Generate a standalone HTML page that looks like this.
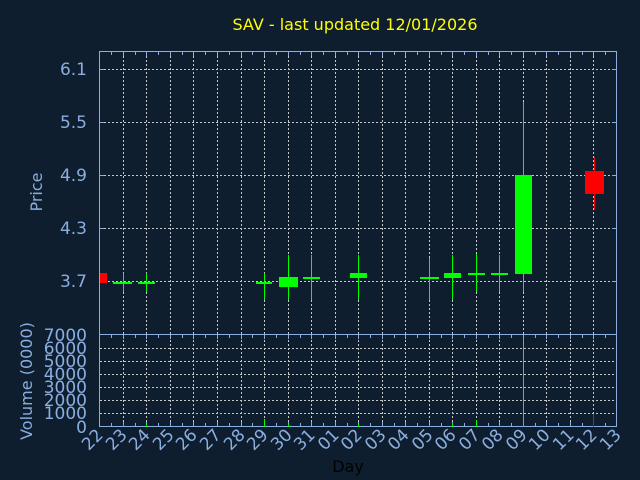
<!DOCTYPE html>
<html><head><meta charset="utf-8"><style>
html,body{margin:0;padding:0;background:#0f1e2f;}
svg{display:block;font-family:"DejaVu Sans","Liberation Sans",sans-serif;}
</style></head><body>
<svg width="640" height="480" viewBox="0 0 640 480" xmlns="http://www.w3.org/2000/svg">
<rect width="640" height="480" fill="#0f1e2f"/>
<text x="355" y="30" fill="#ffff00" font-size="16" text-anchor="middle">SAV - last updated 12/01/2026</text>
<g stroke="#c8c8c8" stroke-width="1" stroke-dasharray="2,2">
<path d="M100 69.5H617M100 122.5H617M100 175.5H617M100 228.5H617M100 281.5H617"/>
<path d="M100 348.5H617M100 361.5H617M100 374.5H617M100 387.5H617M100 400.5H617M100 413.5H617"/>
<path d="M123.5 52V427M146.5 52V427M170.5 52V427M193.5 52V427M217.5 52V427M241.5 52V427M264.5 52V427M288.5 52V427M311.5 52V427M335.5 52V427M358.5 52V427M382.5 52V427M405.5 52V427M429.5 52V427M452.5 52V427M476.5 52V427M499.5 52V427M523.5 52V427M546.5 52V427M570.5 52V427M593.5 52V427"/>
</g>
<g fill="none" stroke="#8aaee0" stroke-width="1">
<rect x="99.5" y="51.5" width="517" height="283"/>
<rect x="99.5" y="334.5" width="517" height="92"/>
<path d="M111.5 52v3M123.5 52v4M135.5 52v3M146.5 52v4M158.5 52v3M170.5 52v4M182.5 52v3M193.5 52v4M205.5 52v3M217.5 52v4M229.5 52v3M241.5 52v4M252.5 52v3M264.5 52v4M276.5 52v3M288.5 52v4M300.5 52v3M311.5 52v4M323.5 52v3M335.5 52v4M347.5 52v3M358.5 52v4M370.5 52v3M382.5 52v4M394.5 52v3M405.5 52v4M417.5 52v3M429.5 52v4M441.5 52v3M452.5 52v4M464.5 52v3M476.5 52v4M488.5 52v3M499.5 52v4M511.5 52v3M523.5 52v4M535.5 52v3M546.5 52v4M558.5 52v3M570.5 52v4M582.5 52v3M593.5 52v4M605.5 52v3"/>
<path d="M111.5 335v3M123.5 335v4M135.5 335v3M146.5 335v4M158.5 335v3M170.5 335v4M182.5 335v3M193.5 335v4M205.5 335v3M217.5 335v4M229.5 335v3M241.5 335v4M252.5 335v3M264.5 335v4M276.5 335v3M288.5 335v4M300.5 335v3M311.5 335v4M323.5 335v3M335.5 335v4M347.5 335v3M358.5 335v4M370.5 335v3M382.5 335v4M394.5 335v3M405.5 335v4M417.5 335v3M429.5 335v4M441.5 335v3M452.5 335v4M464.5 335v3M476.5 335v4M488.5 335v3M499.5 335v4M511.5 335v3M523.5 335v4M535.5 335v3M546.5 335v4M558.5 335v3M570.5 335v4M582.5 335v3M593.5 335v4M605.5 335v3"/>
<path d="M111.5 426v-3M123.5 426v-4M135.5 426v-3M146.5 426v-4M158.5 426v-3M170.5 426v-4M182.5 426v-3M193.5 426v-4M205.5 426v-3M217.5 426v-4M229.5 426v-3M241.5 426v-4M252.5 426v-3M264.5 426v-4M276.5 426v-3M288.5 426v-4M300.5 426v-3M311.5 426v-4M323.5 426v-3M335.5 426v-4M347.5 426v-3M358.5 426v-4M370.5 426v-3M382.5 426v-4M394.5 426v-3M405.5 426v-4M417.5 426v-3M429.5 426v-4M441.5 426v-3M452.5 426v-4M464.5 426v-3M476.5 426v-4M488.5 426v-3M499.5 426v-4M511.5 426v-3M523.5 426v-4M535.5 426v-3M546.5 426v-4M558.5 426v-3M570.5 426v-4M582.5 426v-3M593.5 426v-4M605.5 426v-3"/>
<path d="M100 69.5h4M100 122.5h4M100 175.5h4M100 228.5h4M100 281.5h4M616 69.5h-4M616 122.5h-4M616 175.5h-4M616 228.5h-4M616 281.5h-4"/>
</g>
<g fill="#8aaee0" font-size="17" text-anchor="end">
<text x="87" y="75">6.1</text><text x="87" y="128">5.5</text><text x="87" y="181">4.9</text><text x="87" y="234">4.3</text><text x="87" y="287">3.7</text>
<text x="87" y="341">7000</text><text x="87" y="354">6000</text><text x="87" y="367">5000</text><text x="87" y="380">4000</text><text x="87" y="393">3000</text><text x="87" y="406">2000</text><text x="87" y="419">1000</text><text x="87" y="433">0</text>
</g>
<text transform="translate(42,192) rotate(-90)" fill="#8aaee0" font-size="16" text-anchor="middle">Price</text>
<text transform="translate(32,381) rotate(-90)" fill="#8aaee0" font-size="16" text-anchor="middle">Volume (0000)</text>
<text x="348" y="472" fill="#000000" font-size="16" text-anchor="middle">Day</text>
<g fill="#8aaee0" font-size="17" text-anchor="end">
<text transform="translate(104,436) rotate(-45)">22</text>
<text transform="translate(128,436) rotate(-45)">23</text>
<text transform="translate(151,436) rotate(-45)">24</text>
<text transform="translate(175,436) rotate(-45)">25</text>
<text transform="translate(198,436) rotate(-45)">26</text>
<text transform="translate(222,436) rotate(-45)">27</text>
<text transform="translate(246,436) rotate(-45)">28</text>
<text transform="translate(269,436) rotate(-45)">29</text>
<text transform="translate(293,436) rotate(-45)">30</text>
<text transform="translate(316,436) rotate(-45)">31</text>
<text transform="translate(340,436) rotate(-45)">01</text>
<text transform="translate(363,436) rotate(-45)">02</text>
<text transform="translate(387,436) rotate(-45)">03</text>
<text transform="translate(410,436) rotate(-45)">04</text>
<text transform="translate(434,436) rotate(-45)">05</text>
<text transform="translate(457,436) rotate(-45)">06</text>
<text transform="translate(481,436) rotate(-45)">07</text>
<text transform="translate(504,436) rotate(-45)">08</text>
<text transform="translate(528,436) rotate(-45)">09</text>
<text transform="translate(551,436) rotate(-45)">10</text>
<text transform="translate(575,436) rotate(-45)">11</text>
<text transform="translate(598,436) rotate(-45)">12</text>
<text transform="translate(622,436) rotate(-45)">13</text>
</g>
<g stroke="#00ff00" stroke-width="1">
<path d="M123.5 273V292M146.5 273V292M264.5 273V300M288.5 255V300M311.5 255V300M358.5 255V300M429.5 258V300M452.5 255V300M476.5 254V292M499.5 255V292M523.5 102V292"/>
<path d="M123.5 424V427M146.5 424V427M264.5 419V427M288.5 424V427M358.5 424V427M429.5 425V427M452.5 423V427M476.5 420V427M499.5 425V427M523.5 338V427"/>
</g>
<g fill="#00ff00">
<rect x="113" y="282" width="19" height="2"/>
<rect x="138" y="282" width="17" height="2"/>
<rect x="256" y="282" width="16" height="2"/>
<rect x="279" y="277" width="19" height="10"/>
<rect x="303" y="277" width="17" height="2"/>
<rect x="350" y="273" width="17" height="5"/>
<rect x="420" y="277" width="19" height="2"/>
<rect x="444" y="273" width="17" height="5"/>
<rect x="468" y="273" width="17" height="2"/>
<rect x="491" y="273" width="17" height="2"/>
<rect x="515" y="175" width="17" height="99"/>
</g>
<g fill="#ff0000">
<rect x="100" y="273" width="7" height="10"/>
<rect x="585" y="171" width="19" height="23"/>
</g>
<path d="M594.5 157V210M593.5 414V427" stroke="#ff0000" stroke-width="1"/>
</svg>
</body></html>
